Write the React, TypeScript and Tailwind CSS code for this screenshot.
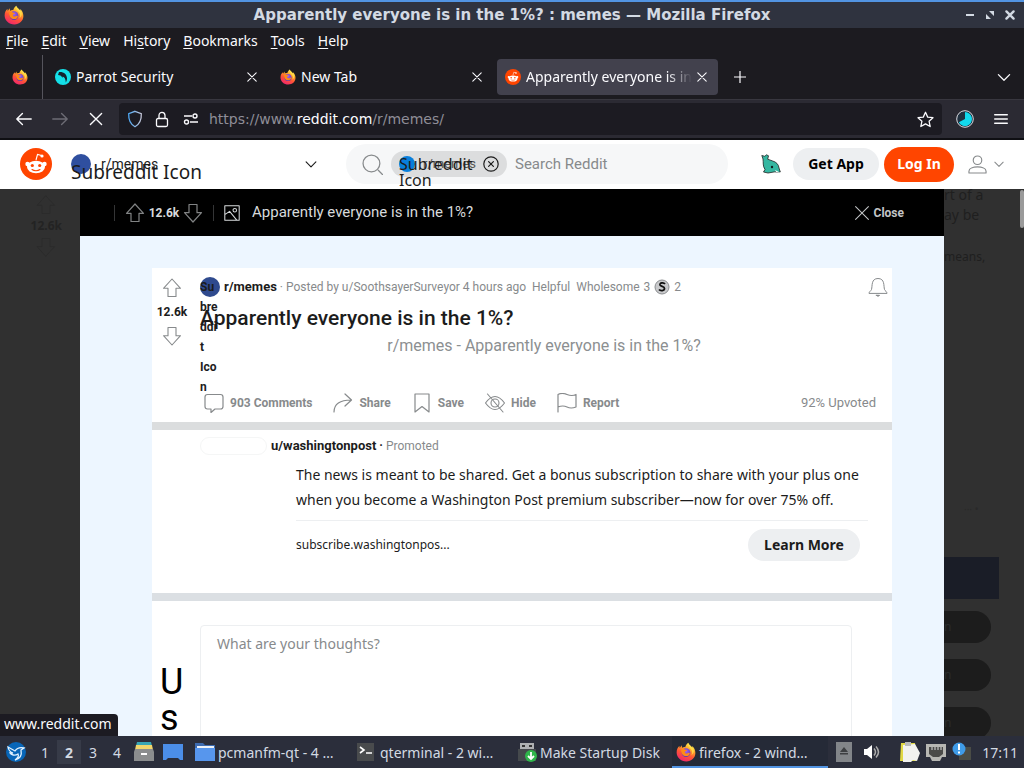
import type { ReactNode } from 'react';

type IconProps = { className?: string };

function FirefoxLogo({ className }: IconProps) {
  return (
    <svg viewBox="0 0 32 32" className={className} aria-hidden="true">
      <defs>
        <linearGradient id="fx-flame" x1="0.8" y1="0" x2="0.3" y2="1">
          <stop offset="0.05" stopColor="#fff44f" />
          <stop offset="0.35" stopColor="#ffa32b" />
          <stop offset="0.62" stopColor="#ff5634" />
          <stop offset="1" stopColor="#f0246f" />
        </linearGradient>
        <radialGradient id="fx-globe" cx="0.5" cy="0.35" r="0.7">
          <stop offset="0" stopColor="#a164f5" />
          <stop offset="1" stopColor="#5536a8" />
        </radialGradient>
      </defs>
      <path d="M19.500 1c1 3.400 4.500 5 6.500 7.800l.3-2.300C29 9.500 31 13 31 17.500 31 25.500 24.500 31 16.500 31 8 31 1 25 1 16.800 1 12 3 8.500 5.500 6.500l.5 3 3-4.500.7 4c1.500-.8 3.500-1 5-.8C15.500 5.500 17 3 19.500 1z" fill="url(#fx-flame)" />
      <circle cx="16" cy="17" r="7" fill="url(#fx-globe)" />
      <path d="M8 12c2-1.500 5-1.500 6.500.2l3 .5c0 1.500-1.800 2-3.200 2.500-.5 2 1 3.600 3.200 3.300 2-.3 2.500-1.500 4.500-1 .6 3-2.500 5-5.500 5-5 0-8.500-3.500-8.500-10.500z" fill="#ff8a16" />
      <path d="M19.500 1c-1 4 .5 6.500 3.500 9.500s4 7 1.500 10.500C30 18 29.500 10.500 26 8.800 24 6 20.500 4.400 19.500 1z" fill="#ffe04a" opacity="0.85" />
    </svg>
  );
}

function Snoo({ className }: IconProps) {
  return (
    <svg viewBox="0 0 32 32" className={className} aria-hidden="true">
      <circle cx="16" cy="16" r="16" fill="#ff4500" />
      <path d="M16 12l1.500-5.500 4.200 1" stroke="#fff" strokeWidth="1.100" fill="none" />
      <circle cx="22" cy="8" r="1.600" fill="#fff" />
      <circle cx="7.500" cy="16" r="2.200" fill="#fff" />
      <circle cx="24.500" cy="16" r="2.200" fill="#fff" />
      <ellipse cx="16" cy="19" rx="9" ry="6.200" fill="#fff" />
      <circle cx="12.300" cy="17.500" r="1.600" fill="#ff4500" />
      <circle cx="19.700" cy="17.500" r="1.600" fill="#ff4500" />
      <path d="M12 21.500c2.200 1.700 5.800 1.700 8 0" stroke="#ff4500" strokeWidth="1.100" fill="none" strokeLinecap="round" />
    </svg>
  );
}

function ParrotLogo() {
  return (
    <svg viewBox="0 0 16 16" className="size-4 shrink-0" aria-hidden="true">
      <circle cx="8" cy="8" r="8" fill="#14e0e8" />
      <path d="M4 3c5-.3 8 2.500 8 6.500 0 2-.8 3-1.200 4-.2-3.500-1-5-3.300-6L8 9 5.500 6.500 3 6z" fill="#14222e" />
    </svg>
  );
}

function Line({ d, className, w = 1.2, box = 20, children }: { d: string; className?: string; w?: number; box?: number; children?: ReactNode }) {
  return (
    <svg viewBox={`0 0 ${box} ${box}`} className={className} fill="none" stroke="currentColor" strokeWidth={w} strokeLinejoin="round" strokeLinecap="round" aria-hidden="true">
      <path d={d} />
      {children}
    </svg>
  );
}

const UP = 'M10 1L18.500 10.300H14V18.500H6V10.300H1.500Z';
const DOWN = 'M10 19L18.500 9.700H14V1.500H6V9.700H1.500Z';
const CROSS = 'M3 3L17 17M17 3L3 17';
const CHEVRON = 'M3 7L10 14L17 7';

function Bell({ className }: IconProps) {
  return (
    <Line className={className} w={1} d="M1 16c0-1.500 2-2 2.500-3.500C4.500 9 3 1.500 10 1.500s5.500 7.500 6.500 11C17 14 19 14.500 19 16Z">
      <path d="M8.500 18.300h3c-.5 1.200-2.500 1.200-3 0z" fill="currentColor" />
    </Line>
  );
}

function TitleBar() {
  return (
    <header className="flex h-7 shrink-0 items-center border-t-2 border-[#5294e2] bg-[#2f333f] px-1 font-['DejaVu_Sans',sans-serif] text-[#d3dae3]">
      <FirefoxLogo className="size-5" />
      <h1 className="flex-1 pl-9 text-center text-[15px] font-bold">Apparently everyone is in the 1%? : memes — Mozilla Firefox</h1>
      <div className="flex items-center gap-2 pr-1">
        <button aria-label="Minimize" className="flex size-3 items-center justify-center"><span className="h-0.5 w-2 bg-[#d3dae3]" /></button>
        <button aria-label="Restore" className="flex size-3 items-center">
          <svg viewBox="0 0 12 12" className="size-3" fill="#d3dae3"><path d="M5 2h5v5zM2 5l5 5H2z" /></svg>
        </button>
        <button aria-label="Close window"><Line className="size-3" w={4} d="M4 4L16 16M16 4L4 16" /></button>
      </div>
    </header>
  );
}

const menus = [['', 'F', 'ile'], ['', 'E', 'dit'], ['', 'V', 'iew'], ['Hi', 's', 'tory'], ['', 'B', 'ookmarks'], ['', 'T', 'ools'], ['', 'H', 'elp']];

function MenuBar() {
  return (
    <nav className="flex h-[27px] shrink-0 items-center gap-[13px] px-1.5 pb-0.5 text-[14px]">
      {menus.map(([a, b, c]) => (
        <button key={b + c}>{a}<span className="underline underline-offset-2">{b}</span>{c}</button>
      ))}
    </nav>
  );
}

function Tab({ icon, title, active }: { icon: ReactNode; title: string; active?: boolean }) {
  return (
    <div role="tab" aria-selected={!!active} className={`flex h-9 w-[221px] items-center rounded pr-2.5 pl-2 ${active ? 'bg-[#42414d]' : ''}`}>
      {icon}
      <span className={`ml-[5px] flex-1 overflow-hidden pb-px text-[14px] whitespace-nowrap ${active ? 'mask-r-from-85% mask-r-to-100%' : ''}`}>{title}</span>
      <button aria-label={`Close ${title}`} className="ml-1"><Line className="size-3" w={1.8} d={CROSS} /></button>
    </div>
  );
}

function TabStrip() {
  return (
    <div role="tablist" className="flex h-11 shrink-0 items-center">
      <div className="flex h-full w-[43px] items-center border-r border-[#55545c] pl-3"><FirefoxLogo className="size-4" /></div>
      <div className="flex gap-1 pl-1">
        <Tab icon={<ParrotLogo />} title="Parrot Security" />
        <Tab icon={<FirefoxLogo className="size-4 shrink-0" />} title="New Tab" />
        <Tab icon={<Snoo className="size-4 shrink-0" />} title="Apparently everyone is in the 1%?" active />
      </div>
      <button aria-label="New tab" className="ml-4"><Line className="size-3" w={2} d="M10 0V20M0 10H20" /></button>
      <button aria-label="List all tabs" className="mr-3 ml-auto"><Line className="size-4" w={1.6} d={CHEVRON} /></button>
    </div>
  );
}

function AddressBar() {
  return (
    <div className="flex h-[41px] shrink-0 items-center border-t border-b-2 border-t-[#38373f] border-b-[#0f0f13] bg-[#2b2a33] px-4 text-[#fbfbfe]">
      <button aria-label="Back"><Line className="size-4" w={1.7} d="M19 10H1M8 3L1 10L8 17" /></button>
      <button aria-label="Forward" className="ml-5 text-[#6d6c75]"><Line className="size-4" w={1.7} d="M1 10H19M12 3L19 10L12 17" /></button>
      <button aria-label="Stop" className="ml-5"><Line className="size-4" w={1.7} d="M3 3L17 17M17 3L3 17" /></button>
      <div className="ml-[15px] flex h-8 flex-1 items-center rounded bg-[#1c1b22] px-2">
        <svg viewBox="0 0 16 18" className="h-[18px] w-4 shrink-0" fill="none" strokeWidth="1.300">
          <defs><linearGradient id="shield"><stop stopColor="#4da8f5" /><stop offset="1" stopColor="#c5c6d8" /></linearGradient></defs>
          <path d="M8 1.300l6.300 2.300C14.600 10 13 14 8 16.700 3 14 1.400 10 1.700 3.600z" stroke="url(#shield)" />
        </svg>
        <svg viewBox="0 0 14 17" className="ml-3 h-[17px] w-[14px] shrink-0" fill="none" stroke="#fbfbfe" strokeWidth="1.300">
          <rect x="1.500" y="7.500" width="11" height="8" rx="1.500" /><path d="M4 7V4.500C4 .3 10 .3 10 4.500V7" />
        </svg>
        <svg viewBox="0 0 16 12" className="ml-3.5 h-3 w-4 shrink-0" fill="none" stroke="#fbfbfe" strokeWidth="1.400">
          <path d="M1 3h8M7 9h8" /><circle cx="12" cy="3" r="2" /><circle cx="3.500" cy="9" r="2" />
        </svg>
        <button className="ml-2.5 flex-1 text-left font-['DejaVu_Sans',sans-serif] text-[14px] text-[#8f8e98]">https://www.<span className="text-[#fbfbfe]">reddit.com</span>/r/memes/</button>
        <button aria-label="Bookmark this page"><Line className="size-[17px]" w={1.5} d="M10 1.500L12.600 7.200L18.800 7.900L14.200 12L15.500 18.300L10 15.200L4.500 18.300L5.800 12L1.200 7.900L7.400 7.200Z" /></button>
      </div>
      <svg viewBox="0 0 18 18" className="ml-[14px] size-[18px]">
        <circle cx="9" cy="9" r="8.300" fill="#20303f" stroke="#d9d9df" />
        <path d="M9 2a7 7 0 1 1-6.200 10.200L9 9z" fill="#12d9ed" />
      </svg>
      <button aria-label="Open menu" className="ml-5"><Line className="size-3.5" w={2} d="M1 4H19M1 10H19M1 16H19" /></button>
    </div>
  );
}

function RedditHeader() {
  return (
    <header className="flex h-[49px] shrink-0 items-center bg-white pb-px text-[#1c1c1c]">
      <a href="#home" aria-label="Reddit home" className="ml-5"><Snoo className="size-8" /></a>
      <button className="relative ml-[19px] flex w-[247px] items-center">
        <span className="size-5 rounded-full bg-[#2f4f9f]" />
        <span className="ml-2.5 font-['Roboto',sans-serif] text-[14px]">r/memes</span>
        <Line className="ml-auto size-3.5" w={1.6} d={CHEVRON} />
        <span className="absolute top-0 left-0 font-['Noto_Sans',sans-serif] text-[19px] leading-[36px]">Subreddit Icon</span>
      </button>
      <div className="ml-[28px] flex h-10 flex-1 items-center rounded-full bg-[#f6f7f8] pl-4">
        <Line className="size-[21px] text-[#878a8c]" w={1.2} d="M15.500 15.500L19.500 19.500"><circle cx="9" cy="9" r="8" /></Line>
        <span className="relative ml-2 flex h-[26px] w-[116px] items-center rounded-full bg-[#dcddde] pl-2">
          <span className="size-4 rounded-full bg-[#087fdb]" />
          <span className="ml-2 font-['Roboto',sans-serif] text-[13px] text-[#555]">r/memes</span>
          <button aria-label="Remove r/memes filter" className="mr-2 ml-auto"><Line className="size-4" w={1.5} d="M7 7L13 13M13 7L7 13"><circle cx="10" cy="10" r="9" /></Line></button>
          <span className="absolute top-[5px] left-2 w-20 font-['Noto_Sans',sans-serif] text-[16px] leading-4">Subreddit Icon</span>
        </span>
        <label htmlFor="search" className="sr-only">Search</label>
        <input id="search" type="search" placeholder="Search Reddit" className="ml-2 w-40 min-w-0 flex-1 bg-transparent font-['Roboto',sans-serif] text-[15px] outline-none placeholder:text-[#878a8c]" />
      </div>
      <svg viewBox="0 0 20 20" className="ml-[33px] size-5">
        <path d="M.8 1.500l3 .8L5.500.8l2 1-.8 3.400 5 1.800c3.500 1 6 3.500 6.300 7l1.300 4-2.300.5-3-.7-7 1.200L2.500 18 4 15.500C1.500 12 2.500 8 2 5z" fill="#35b7a1" stroke="#222" strokeWidth=".8" />
        <circle cx="11" cy="13" r="1.200" fill="#10201f" /><path d="M14 16l5.500 2.800-4-.2z" fill="#fff" />
      </svg>
      <button className="ml-3 h-8 w-[86px] rounded-full bg-[#edeff1] pb-0.5 text-[14px] font-bold text-black">Get App</button>
      <button className="ml-[5px] h-[35px] w-[70px] rounded-full bg-[#ff4500] pb-0.5 text-[14px] font-bold text-white">Log In</button>
      <button aria-label="User menu" className="mr-[19px] ml-[14px] flex items-center gap-1.5 text-[#878a8c]">
        <Line className="size-[19px]" w={1.2} d="M1 19v-2c0-6 18-6 18 0v2Z"><circle cx="10" cy="5.500" r="4.500" /></Line>
        <Line className="size-3" w={1.7} d={CHEVRON} />
      </button>
    </header>
  );
}

function LightboxBar() {
  return (
    <div className="flex h-[47px] shrink-0 items-center bg-black pr-10 pl-[34px] font-['Roboto',sans-serif] text-[#d7dadc]">
      <span className="h-4 border-l border-[#343536]" />
      <button aria-label="Upvote" className="ml-2.5 text-[#818384]"><Line className="size-5" w={1.2} d={UP} /></button>
      <span className="mx-[3px] w-8 text-center text-[12px] font-bold">12.6k</span>
      <button aria-label="Downvote" className="text-[#818384]"><Line className="size-5" w={1.2} d={DOWN} /></button>
      <span className="ml-2.5 h-4 border-l border-[#343536]" />
      <Line className="ml-2.5 size-4" w={1.3} d="M1 1H19V19H1ZM1 12L7 8L16 19"><circle cx="13.500" cy="6.500" r="2.200" /></Line>
      <span className="ml-3 text-[15px]">Apparently everyone is in the 1%?</span>
      <button className="ml-auto flex items-center gap-1 text-[12px] font-bold text-[#c3c5c7]"><Line className="size-4" w={1.3} d="M2 2L18 18M18 2L2 18" />Close</button>
    </div>
  );
}

function Action({ icon, children }: { icon: ReactNode; children: ReactNode }) {
  return <button className="flex items-center gap-1.5">{icon}{children}</button>;
}

function Post() {
  return (
    <article className="flex h-[154px] shrink-0 bg-white pr-1 font-['Roboto',sans-serif] text-[#1c1c1c]">
      <div className="flex w-10 flex-col items-center pt-2.5 text-[#878a8c]">
        <button aria-label="Upvote"><Line className="size-5" w={1.1} d={UP} /></button>
        <span className="my-1.5 text-[12px] leading-4 font-bold text-[#1c1c1c]">12.6k</span>
        <button aria-label="Downvote"><Line className="size-5" w={1.1} d={DOWN} /></button>
      </div>
      <div className="relative flex min-w-0 flex-1 flex-col pt-2 pl-2">
        <div className="flex h-[22px] items-center text-[12px] whitespace-nowrap text-[#878a8c]">
          <span className="size-5 rounded-full bg-[#2f4a8e]" />
          <a href="#memes" className="ml-1 text-[13px] font-bold text-[#1c1c1c]">r/memes</a>
          <span className="mx-[3px]">·</span>
          <span>Posted by u/SoothsayerSurveyor 4 hours ago</span>
          <span className="ml-1.5">Helpful</span>
          <span className="ml-1.5">Wholesome</span>
          <span className="ml-1">3</span>
          <svg viewBox="0 0 16 16" className="mx-1 size-4">
            <circle cx="8" cy="8" r="7" fill="#c8c9cb" stroke="#8b8d90" /><path d="M11 5C9.500 3 5.500 3.800 6 6c.5 1.700 4.500 1.200 4.500 3.500S6.500 12.300 5 10.500" fill="none" stroke="#111" strokeWidth="1.800" />
          </svg>
          <span>2</span>
          <button aria-label="Follow post" className="ml-auto"><Bell className="size-5" /></button>
        </div>
        <span className="absolute top-[9px] left-2 w-5 text-[12px] leading-5 font-bold">Su<br />bre<br />ddi<br />t<br />Ico<br />n</span>
        <h2 className="mt-2 text-[21px] leading-6 font-medium">Apparently everyone is in the 1%?</h2>
        <p className="mt-1 text-center text-[16px] leading-6 text-[#8c8f91]">r/memes - Apparently everyone is in the 1%?</p>
        <div className="mt-auto flex h-[38px] items-center gap-[21px] pr-3 pl-1 text-[12px] font-bold text-[#878a8c]">
          <Action icon={<Line className="size-5" w={1.2} d="M3.500 1.500H16.500Q19 1.500 19 4V13.500Q19 16 16.500 16H11L7 19.500V16H3.500Q1 16 1 13.500V4Q1 1.500 3.500 1.500Z" />}>903 Comments</Action>
          <Action icon={<Line className="size-5" w={1.2} d="M1 19C1 11 7 7 18 7M12 1L18.500 7L12 13" />}>Share</Action>
          <Action icon={<Line className="size-5" w={1.2} d="M3 1H17V19L10 13.500L3 19Z" />}>Save</Action>
          <Action icon={<Line className="size-5" w={1.1} d="M0.500 10Q10-3 19.500 10Q10 23 0.500 10ZM2.500 1L18 19"><circle cx="10" cy="10" r="4" /></Line>}>Hide</Action>
          <Action icon={<Line className="size-5" w={1.2} d="M1 19V1.500Q5-0.500 10 1.500T19 1.500V14Q14 16 10 14T1 14" />}>Report</Action>
          <span className="ml-auto text-[13px] font-normal">92% Upvoted</span>
        </div>
      </div>
    </article>
  );
}

function Promoted() {
  return (
    <section className="h-[163px] shrink-0 bg-white px-6 pt-1.5 text-[#1c1c1c]">
      <div className="ml-6 flex h-5 items-center font-['Roboto',sans-serif] text-[12px]">
        <span className="h-[18px] w-[67px] rounded-full border border-[#f5f6f6]" />
        <a href="#wp" className="ml-1 text-[13px] font-bold">u/washingtonpost</a>
        <span className="mx-[3px] font-bold">·</span>
        <span className="text-[#878a8c]">Promoted</span>
      </div>
      <div className="ml-[120px]">
        <p className="border-b border-[#edeff1] pt-1.5 pb-2 text-[14px] leading-[25px]">The news is meant to be shared. Get a bonus subscription to share with your plus one when you become a Washington Post premium subscriber—now for over 75% off.</p>
        <div className="flex items-center justify-between pt-2 pr-2">
          <a href="#subscribe" className="text-[12px]">subscribe.washingtonpos...</a>
          <button className="h-8 w-28 rounded-full bg-[#edeff1] pb-0.5 text-[14px] font-bold">Learn More</button>
        </div>
      </div>
    </section>
  );
}

function CommentForm() {
  return (
    <form className="flex min-h-0 flex-1 bg-white pt-6 pr-10 pl-2">
      <div className="w-10 shrink-0 pt-[39px] font-['Roboto',sans-serif] text-[36px] leading-[36px] text-black">U<br />s</div>
      <label htmlFor="comment" className="sr-only">Comment</label>
      <textarea id="comment" placeholder="What are your thoughts?" className="h-40 flex-1 resize-none rounded border border-[#edeff1] px-4 py-2 text-[14px] leading-5 placeholder:text-[#878a8c]" />
    </form>
  );
}

function RedditPage() {
  return (
    <main className="flex min-h-0 flex-1 flex-col">
      <RedditHeader />
      <div className="relative flex min-h-0 flex-1 bg-[#303030]">
        <aside className="flex w-20 shrink-0 flex-col items-end pr-[18px] text-[12px] font-bold text-[#232323]">
          <Line className="mt-1.5 mr-1.5 size-5 text-[#2b2b2b]" w={1} d={UP} />
          <span className="my-0.5">12.6k</span>
          <Line className="mr-1.5 size-5 text-[#2b2b2b]" w={1} d={DOWN} />
        </aside>
        <div className="flex min-w-0 flex-1 flex-col overflow-hidden">
          <LightboxBar />
          <div className="flex min-h-0 flex-1 flex-col bg-[#edf6ff] pt-8 pr-[52px] pl-[72px]">
            <Post />
            <div className="h-2 shrink-0 bg-[#dbddde]" />
            <Promoted />
            <div className="h-2 shrink-0 bg-[#dbdfe3]" />
            <CommentForm />
          </div>
        </div>
        <aside className="flex w-20 shrink-0 flex-col overflow-hidden text-[14px] leading-5 text-[#1f1f1f]">
          <p className="-mt-1 whitespace-nowrap">rt of a<br />ay be</p>
          <p className="mt-[22px] text-[12px]">means,</p>
          <p className="mt-auto mb-10 pl-5 text-[10px] leading-4 text-[#292929]">··· •</p>
          <div className="h-[42px] w-[55px] shrink-0 bg-[#1a1d27]" />
          <div className="-mb-[3px] flex flex-col gap-4 pt-3 text-[12px] text-[#2a2d2d]">
            <span className="flex h-8 w-[47px] shrink-0 items-center rounded-r-full bg-[#1c1c1c]">n</span>
            <span className="flex h-8 w-[47px] shrink-0 items-center rounded-r-full bg-[#1c1c1c]">n</span>
            <span className="flex h-8 w-[47px] shrink-0 items-center rounded-r-full bg-[#1c1c1c]">n</span>
          </div>
        </aside>
        <span className="absolute top-px right-0 h-[38px] w-1 rounded-full bg-[#9a9a9a]" />
        <span className="absolute bottom-0 left-0 rounded-tr bg-[#1c1b22] pr-1.5 pb-0.5 pl-1 text-[14px] leading-5 text-[#fbfbfe]">www.reddit.com</span>
      </div>
    </main>
  );
}

function Task({ icon, label, className }: { icon: ReactNode; label: string; className: string }) {
  return <button className={`flex h-8 items-center gap-[3px] border-y-2 text-left whitespace-nowrap ${className}`}>{icon}{label}</button>;
}

function Taskbar() {
  return (
    <footer className="flex h-8 shrink-0 items-center bg-[#2b2e3b] px-1.5 text-[14px] text-[#d3dae3]">
      <button aria-label="Applications">
        <svg viewBox="0 0 20 20" className="size-5"><circle cx="10" cy="10" r="10" fill="#0866b8" /><path d="M2 5l7 4c2-3 5-4 9-3l-3 2c1 5-1 9-6 10 3-2 4-4 3-6-3 2-7 1-8-1l3 0C4 10 2.500 8 2 5z" fill="none" stroke="#e2f2ff" strokeWidth="1.300" /></svg>
      </button>
      <div className="ml-[7px] flex">
        <button className="h-6 w-6">1</button>
        <button className="h-6 w-6 bg-[#373b48] font-bold">2</button>
        <button className="h-6 w-6">3</button>
        <button className="h-6 w-6">4</button>
      </div>
      <svg viewBox="0 0 20 20" className="ml-[5px] size-5"><path d="M3 0h14l1 4H2z" fill="#38a6b5" /><path d="M2 3h16l1 5H1z" fill="#f1d66c" /><path d="M1 7h18l1 3v9H0v-9z" fill="#8b8d8e" /><path d="M7 11h6v2H7z" fill="#fff" /></svg>
      <svg viewBox="0 0 20 20" className="ml-[9px] size-5"><path d="M0 2h20v16h-3l-2-2H5l-2 2H0z" fill="#4b8ee8" /></svg>
      <Task className="ml-3 w-[150px] border-transparent" label="pcmanfm-qt - 4 …" icon={<svg viewBox="0 0 20 20" className="size-5"><path d="M0 1h8l2 2h10v16H0z" fill="#3d6bb0" /><path d="M2 4h17v3H2z" fill="#eef2f8" /><path d="M0 6h20v13H0z" fill="#5796ed" /></svg>} />
      <Task className="ml-3 w-[148px] border-transparent" label="qterminal - 2 wi…" icon={<svg viewBox="0 0 20 20" className="size-5"><path d="M0 1h17v18H0z" fill="#494b4d" /><path d="M3 5l4 3-4 3M9 11h6" fill="none" stroke="#fff" strokeWidth="1.600" /></svg>} />
      <Task className="ml-3 w-[147px] border-transparent" label="Make Startup Disk" icon={<svg viewBox="0 0 20 20" className="size-5"><path d="M3 1h14v6H3z" fill="#aeb0b2" /><path d="M5 3h3v2H5zM12 3h3v2h-3z" fill="#333" /><path d="M1 7h18v12H1z" fill="#45494c" /><circle cx="14" cy="14" r="6" fill="#2fb54a" /><path d="M14 10v7M11 14l3 3 3-3" fill="none" stroke="#fff" strokeWidth="1.800" /></svg>} />
      <Task className="ml-2 w-[156px] border-t-transparent border-b-[#5294e2] bg-[#252a37] pl-1" label="firefox - 2 wind…" icon={<FirefoxLogo className="size-5" />} />
      <div className="ml-auto flex items-center">
        <svg viewBox="0 0 16 20" className="h-5 w-4"><path d="M0 0h16v20H0z" fill="#828589" /><path d="M8 5l4 5H4zM4 11h8v1.500H4z" fill="#3d3f42" /></svg>
        <svg viewBox="0 0 16 16" className="ml-3 size-4"><path d="M0 5h3l5-4v14l-5-4H0z" fill="#fff" /><path d="M10 4.500q3 3.500 0 7M12 2.500q5 5.500 0 11" fill="none" stroke="#aaa" strokeWidth="1.500" /></svg>
        <svg viewBox="0 0 20 20" className="ml-5 size-5"><path d="M1 1h14l1 18H0z" fill="#e1d844" /><path d="M3 3l12-1 5 9-3 8-4-1-2 2H3z" fill="#f2f2ef" /><path d="M5 0h6v4H5z" fill="#b9babb" /></svg>
        <svg viewBox="0 0 20 20" className="ml-1.5 size-5"><path d="M0 2h20v13h-4l-2 4H6l-2-4H0z" fill="#b7b7b3" /><path d="M3 5h14v7l-4 3H7l-4-3z" fill="#4b4b49" /><path d="M6 5v3M9 5v3M12 5v3M15 5v3" stroke="#ddd" /></svg>
        <svg viewBox="0 0 20 20" className="ml-1.5 size-5"><path d="M7 5h12v13H7z" fill="#4a4c46" /><circle cx="7" cy="7" r="6.500" fill="#3f9be8" /><path d="M6 2h2v6H6zM6 9.500h2v2H6z" fill="#fff" /></svg>
        <time className="ml-2.5">17:11</time>
      </div>
    </footer>
  );
}

export default function App() {
  return (
    <div className="flex h-screen flex-col overflow-hidden bg-[#1c1b20] font-['Noto_Sans',sans-serif] text-[#fbfbfe]">
      <TitleBar />
      <MenuBar />
      <TabStrip />
      <AddressBar />
      <RedditPage />
      <Taskbar />
    </div>
  );
}
